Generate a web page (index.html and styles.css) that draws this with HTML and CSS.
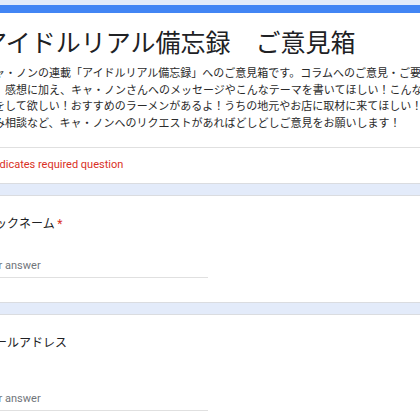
FILE: index.html
```html
<!DOCTYPE html>
<html lang="ja">
<head>
<meta charset="utf-8">
<title>アイドルリアル備忘録　ご意見箱</title>
<link rel="stylesheet" href="styles.css">
</head>
<body>
<div class="page">
  <div class="card header">
    <h1 class="title">アイドルリアル備忘録　ご意見箱</h1>
    <p class="desc">キャ・ノンの連載「アイドルリアル備忘録」へのご意見箱です。コラムへのご意見・ご要望、感想に加え、キャ・ノンさんへのメッセージやこんなテーマを書いてほしい！こんな企画をして欲しい！おすすめのラーメンがあるよ！うちの地元やお店に取材に来てほしい！お悩み相談など、キャ・ノンへのリクエストがあればどしどしご意見をお願いします！</p>
    <div class="req">* Indicates required question</div>
  </div>
  <div class="card question">
    <div class="qtitle">ニックネーム <span class="star">*</span></div>
    <div class="answer">Your answer</div>
  </div>
  <div class="card question q2">
    <div class="qtitle">メールアドレス</div>
    <div class="answer">Your answer</div>
  </div>
</div>
</body>
</html>
```

FILE: styles.css
```css
html, body {
  margin: 0;
  padding: 0;
}
body {
  background: #e3ebfa;
  overflow: hidden;
  height: 420px;
  font-family: Roboto, "Noto Sans CJK JP", sans-serif;
  color: #202124;
  text-spacing-trim: space-all;
}
.page {
  margin-left: -37px;
  width: 496px;
  padding-top: 5px;
  display: flex;
  flex-direction: column;
  gap: 11px;
}
.card {
  background: #fff;
  border: 1px solid #dadce0;
  border-radius: 6px;
  padding: 0 19px;
}
.header {
  border-top: 8px solid #4285f4;
  padding-top: 1px;
  padding-left: 0;
  padding-right: 0;
}
.title {
  margin: 0;
  padding: 12px 19px 0 18px;
  font-family: "Noto Sans CJK JP", sans-serif;
  font-weight: 400;
  font-size: 25px;
  line-height: 31px;
  color: #202124;
  white-space: nowrap;
}
.desc {
  margin: 7px 0 0;
  padding: 0 19px 17px;
  font-family: "Noto Sans CJK JP", sans-serif;
  font-size: 11px;
  line-height: 16.5px;
  color: #2a2a2a;
}
.req {
  border-top: 1px solid #e0e0e0;
  padding: 10px 19px 11px;
  font-size: 11px;
  line-height: 14px;
  color: #d93025;
}
.question {
  padding-top: 18px;
  padding-bottom: 24px;
}
.qtitle {
  font-family: "Noto Sans CJK JP", sans-serif;
  font-size: 12px;
  line-height: 18px;
  color: #202124;
  white-space: nowrap;
}
.star {
  color: #d93025;
  font-family: Roboto, sans-serif;
}
.answer {
  margin-top: 26px;
  margin-left: -3px;
  width: 50%;
  font-size: 11px;
  line-height: 14px;
  color: #70757a;
  padding-bottom: 4px;
  border-bottom: 1px solid #e0e0e0;
}
.q2 {
  padding-top: 18px;
}
.q2 .answer {
  margin-top: 41px;
}
```
